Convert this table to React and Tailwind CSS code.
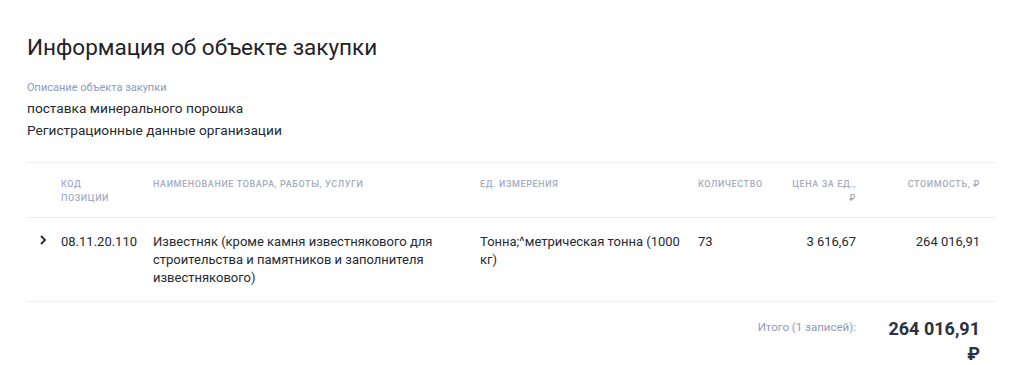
export default function App() {
  const cols = "grid grid-cols-[34px_92px_327px_218px_82px_76px_124px_15px]"

  return (
    <div className="w-[1023px] h-[365px] bg-white overflow-hidden font-['Roboto',_'Liberation_Sans',_sans-serif] text-[#26292e]">
      <div className="pl-[27px] pr-[28px] pt-[30px]">
        <h1 className="text-[22.5px] leading-[34px] text-[#1f2329]">Информация об объекте закупки</h1>

        <div className="mt-[17px] text-[11px] leading-[14px] text-[#8d9bbd]">Описание объекта закупки</div>
        <div className="mt-[2px] text-[13.7px] leading-[22px]">
          <p>поставка минерального порошка</p>
          <p>Регистрационные данные организации</p>
        </div>

        {/* Table */}
        <div className="mt-[21px] border-t border-[#e9ecf1]">
          <div className={`${cols} pt-[14px] pb-[12px] border-b border-[#e9ecf1] text-[9px] leading-[14px] font-medium uppercase tracking-[0.067em] text-[#a3acc2]`}>
            <div />
            <div className="pr-[30px]">Код позиции</div>
            <div>Наименование товара, работы, услуги</div>
            <div>Ед. измерения</div>
            <div>Количество</div>
            <div className="text-right pl-[4px]">Цена за ед., ₽</div>
            <div className="text-right">Стоимость, ₽</div>
            <div />
          </div>

          <div className={`${cols} pt-[15px] pb-[14px] border-b border-[#e9ecf1] text-[13px] leading-[18px]`}>
            <div className="pl-[11px] pt-[1px]">
              <svg width="10" height="12" viewBox="0 0 10 12" fill="none">
                <path d="M3 2l4 4-4 4" stroke="#26292e" strokeWidth="1.8" />
              </svg>
            </div>
            <div>08.11.20.110</div>
            <div className="pr-[30px]">Известняк (кроме камня известнякового для строительства и памятников и заполнителя известнякового)</div>
            <div className="pr-[16px]">Тонна;^метрическая тонна (1000 кг)</div>
            <div>73</div>
            <div className="text-right">3 616,67</div>
            <div className="text-right">264 016,91</div>
            <div />
          </div>

          <div className={`${cols} pt-[14px] pb-0 border-b border-[#e9ecf1]`}>
            <div className="col-span-6 text-right text-[11.5px] leading-[16px] text-[#8d9bbd] pt-[3px]">Итого (1 записей):</div>
            <div className="flex justify-end">
              <div className="w-[92px] text-right text-[18px] leading-[25px] font-bold text-[#2a3142]">264 016,91 ₽</div>
            </div>
            <div />
          </div>
        </div>
      </div>
    </div>
  )
}
